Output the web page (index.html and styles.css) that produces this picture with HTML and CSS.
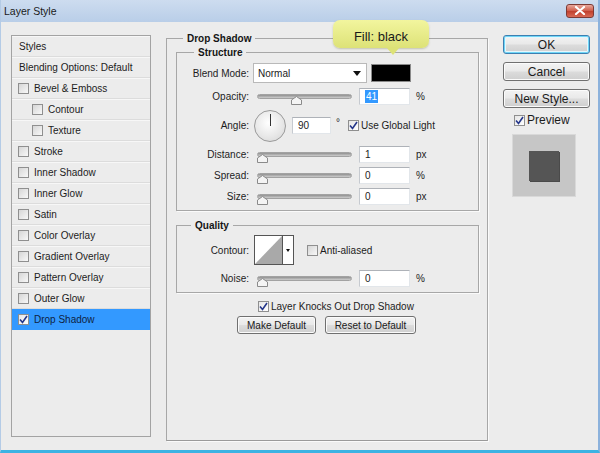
FILE: index.html
```html
<!DOCTYPE html>
<html lang="en">
<head>
    <meta charset="UTF-8">
    <title>Layer Style</title>
    <link rel="stylesheet" href="styles.css">
</head>
<body>
<div class="window">
    <div class="titlebar">
        <span class="title">Layer Style</span>
        <span class="close">
            <svg width="12" height="9" viewBox="0 0 12 9"><path d="M2 1 L10 8 M10 1 L2 8" stroke="#fff" stroke-width="2.2" stroke-linecap="round"/></svg>
        </span>
    </div>

    <div class="content">
        <!-- lista de estilos -->
        <div class="styles-list">
            <div class="item head">Styles</div>
            <div class="item head">Blending Options: Default</div>
            <div class="item"><span class="cb"></span>Bevel &amp; Emboss</div>
            <div class="item sub"><span class="cb"></span>Contour</div>
            <div class="item sub"><span class="cb"></span>Texture</div>
            <div class="item"><span class="cb"></span>Stroke</div>
            <div class="item"><span class="cb"></span>Inner Shadow</div>
            <div class="item"><span class="cb"></span>Inner Glow</div>
            <div class="item"><span class="cb"></span>Satin</div>
            <div class="item"><span class="cb"></span>Color Overlay</div>
            <div class="item"><span class="cb"></span>Gradient Overlay</div>
            <div class="item"><span class="cb"></span>Pattern Overlay</div>
            <div class="item"><span class="cb"></span>Outer Glow</div>
            <div class="item selected"><span class="cb on"><svg width="9" height="9" viewBox="0 0 9 9"><path d="M1 4.5 L3.5 7.5 L8 1" fill="none" stroke="#24368a" stroke-width="1.6"/></svg></span>Drop Shadow</div>
        </div>

        <!-- panel central -->
        <fieldset class="group main">
            <legend>Drop Shadow</legend>

            <fieldset class="group inner structure">
                <legend>Structure</legend>
                <div class="row blend-row">
                    <label class="lbl">Blend Mode:</label>
                    <div class="select">Normal<span class="arrow"></span></div>
                    <div class="swatch"></div>
                </div>
                <div class="row slider-row">
                    <label class="lbl">Opacity:</label>
                    <div class="slider"><span class="thumb" style="left: 37%"><svg width="11" height="9" viewBox="0 0 11 9"><path d="M0.5 8.5 V4 L5.5 0.5 L10.5 4 V8.5 Z" fill="#f4f4f4" stroke="#8a8a8a"/></svg></span></div>
                    <div class="field"><span class="sel">41</span></div>
                    <span class="unit">%</span>
                </div>
                <div class="row angle-row">
                    <label class="lbl">Angle:</label>
                    <div class="dial"><span class="hand"></span></div>
                    <div class="field short">90</div>
                    <span class="deg">°</span>
                    <span class="cb on"><svg width="9" height="9" viewBox="0 0 9 9"><path d="M1 4.5 L3.5 7.5 L8 1" fill="none" stroke="#24368a" stroke-width="1.6"/></svg></span>
                    <span class="cb-text">Use Global Light</span>
                </div>
                <div class="row slider-row small first">
                    <label class="lbl">Distance:</label>
                    <div class="slider"><span class="thumb" style="left: 0%"><svg width="11" height="9" viewBox="0 0 11 9"><path d="M0.5 8.5 V4 L5.5 0.5 L10.5 4 V8.5 Z" fill="#f4f4f4" stroke="#8a8a8a"/></svg></span></div>
                    <div class="field">1</div>
                    <span class="unit">px</span>
                </div>
                <div class="row slider-row small">
                    <label class="lbl">Spread:</label>
                    <div class="slider"><span class="thumb" style="left: 0%"><svg width="11" height="9" viewBox="0 0 11 9"><path d="M0.5 8.5 V4 L5.5 0.5 L10.5 4 V8.5 Z" fill="#f4f4f4" stroke="#8a8a8a"/></svg></span></div>
                    <div class="field">0</div>
                    <span class="unit">%</span>
                </div>
                <div class="row slider-row small">
                    <label class="lbl">Size:</label>
                    <div class="slider"><span class="thumb" style="left: 0%"><svg width="11" height="9" viewBox="0 0 11 9"><path d="M0.5 8.5 V4 L5.5 0.5 L10.5 4 V8.5 Z" fill="#f4f4f4" stroke="#8a8a8a"/></svg></span></div>
                    <div class="field">0</div>
                    <span class="unit">px</span>
                </div>
            </fieldset>

            <fieldset class="group inner quality">
                <legend>Quality</legend>
                <div class="row contour-row">
                    <label class="lbl">Contour:</label>
                    <div class="contour">
                        <svg width="27" height="28" viewBox="0 0 27 28"><rect width="27" height="28" fill="#fff"/><path d="M0 28 L27 0 V28 Z" fill="#a9a9a9"/></svg>
                        <span class="drop"></span>
                    </div>
                    <span class="cb"></span>
                    <span class="cb-text">Anti-aliased</span>
                </div>
                <div class="row slider-row">
                    <label class="lbl">Noise:</label>
                    <div class="slider"><span class="thumb" style="left: 0%"><svg width="11" height="9" viewBox="0 0 11 9"><path d="M0.5 8.5 V4 L5.5 0.5 L10.5 4 V8.5 Z" fill="#f4f4f4" stroke="#8a8a8a"/></svg></span></div>
                    <div class="field">0</div>
                    <span class="unit">%</span>
                </div>
            </fieldset>

            <div class="knock">
                <span class="cb on"><svg width="9" height="9" viewBox="0 0 9 9"><path d="M1 4.5 L3.5 7.5 L8 1" fill="none" stroke="#24368a" stroke-width="1.6"/></svg></span>
                <span class="cb-text">Layer Knocks Out Drop Shadow</span>
            </div>
            <div class="defaults">
                <button class="btn make">Make Default</button>
                <button class="btn reset">Reset to Default</button>
            </div>
        </fieldset>

        <!-- columna derecha -->
        <div class="side">
            <button class="btn side-btn ok">OK</button>
            <button class="btn side-btn">Cancel</button>
            <button class="btn side-btn">New Style...</button>
            <div class="preview-check">
                <span class="cb on"><svg width="9" height="9" viewBox="0 0 9 9"><path d="M1 4.5 L3.5 7.5 L8 1" fill="none" stroke="#24368a" stroke-width="1.6"/></svg></span>
                <span class="cb-text">Preview</span>
            </div>
            <div class="preview"><div class="swatch-preview"></div></div>
        </div>
    </div>

    <div class="tooltip">Fill: black</div>
</div>
</body>
</html>
```

FILE: styles.css
```css
body {
    margin: 0;
    padding: 0;
    font-family: 'Liberation Sans', Arial, sans-serif;
    font-size: 10px;
    color: #1c1c1c;
    background: #ececec;
}
.window {
    position: relative;
    width: 600px;
    height: 453px;
    box-sizing: border-box;
    background: #ececec;
    border-right: 2px solid #8cb2dc;
    border-bottom: 3px solid #3db3e3;
    border-left: 1px solid #b4cbe6;
    overflow: hidden;
}
.titlebar {
    height: 22px;
    display: flex;
    align-items: center;
    justify-content: space-between;
    background: linear-gradient(to bottom, #cddcef, #b9cee8);
    padding: 0 4px 0 3px;
}
.title {
    font-size: 10.5px;
    color: #1a1a1a;
}
.close {
    width: 28px;
    height: 14px;
    margin-top: -1px;
    border: 1px solid #7d3a35;
    border-radius: 3px;
    background: linear-gradient(to bottom, #e8a99e, #cf5a47 50%, #c03f2c 51%, #d96a55);
    display: flex;
    align-items: center;
    justify-content: center;
    box-sizing: border-box;
}
.content {
    display: flex;
    align-items: flex-start;
}

/* lista izquierda */
.styles-list {
    width: 140px;
    height: 402px;
    margin: 13px 0 0 10px;
    box-sizing: border-box;
    border: 1px solid #a3a3a3;
    background: #ececec;
}
.item {
    height: 21px;
    box-sizing: border-box;
    border-bottom: 1px solid #dcdcdc;
    box-shadow: inset 0 1px 0 #f7f7f7;
    display: flex;
    align-items: center;
    padding-left: 6px;
}
.item.head {
    padding-left: 7px;
}
.item.sub {
    padding-left: 20px;
}
.item.selected {
    background: #3399ff;
    box-shadow: none;
    color: #0f1f3f;
    border-bottom-color: #3399ff;
}
.cb {
    width: 11px;
    height: 11px;
    box-sizing: border-box;
    border: 1px solid #8f8f8f;
    background: linear-gradient(135deg, #d6d6d6, #f8f8f8);
    display: inline-flex;
    align-items: center;
    justify-content: center;
    margin-right: 5px;
    flex: none;
}
.cb.on {
    background: linear-gradient(135deg, #e6e6e6, #ffffff);
}

/* grupos */
.group {
    margin: 0;
    padding: 0;
    border: 1px solid #a7a7a7;
    box-shadow: 1px 1px 0 #fafafa;
    min-width: 0;
}
.group legend {
    font-weight: bold;
    font-size: 10px;
    line-height: 13px;
    padding: 0 4px;
    color: #151515;
}
.main {
    width: 322px;
    height: 409px;
    box-sizing: border-box;
    margin: 10px 0 0 15px;
    padding: 0 8px 0 9px;
    border-bottom-color: #9a9a9a;
}
.main > legend {
    margin-left: 7px;
}
.inner {
    width: 303px;
    box-sizing: border-box;
}
.structure > legend {
    margin-left: 17px;
}
.quality > legend {
    margin-left: 14px;
}
.structure {
    margin-top: 1px;
    padding: 3px 0 3px 0;
}
.quality {
    margin-top: 8px;
    padding: 2px 0 2px 0;
}
.row {
    display: flex;
    align-items: center;
}
.lbl {
    width: 72px;
    text-align: right;
    flex: none;
}
.blend-row {
    height: 22px;
}
.select {
    width: 114px;
    height: 20px;
    margin-left: 4px;
    box-sizing: border-box;
    background: #fff;
    border: 1px solid #b9b9b9;
    display: flex;
    align-items: center;
    justify-content: space-between;
    padding: 0 5px 0 4px;
}
.arrow {
    width: 0;
    height: 0;
    border-left: 4px solid transparent;
    border-right: 4px solid transparent;
    border-top: 5px solid #111;
}
.swatch {
    width: 40px;
    height: 18px;
    margin-left: 4px;
    box-sizing: border-box;
    background: #000;
    border: 1px solid #8a8a8a;
}
.slider-row {
    height: 24px;
}
.slider-row.small {
    height: 21px;
}
.slider-row.small.first {
    height: 22px;
}
.slider {
    position: relative;
    width: 95px;
    height: 5px;
    margin: 0 7px 0 8px;
    box-sizing: border-box;
    border: 1px solid #a2a2a2;
    border-radius: 3px;
    background: linear-gradient(to bottom, #909090, #cdcdcd);
}
.thumb {
    position: absolute;
    top: 1px;
    margin-left: -1px;
    line-height: 0;
}
.field {
    width: 51px;
    height: 17px;
    box-sizing: border-box;
    background: #fff;
    border: 1px solid #e2e6ea;
    border-top-color: #aeb2b8;
    border-left-color: #c6cad0;
    padding-left: 5px;
    display: flex;
    align-items: center;
}
.field.short {
    width: 39px;
    margin-left: 5px;
}
.sel {
    background: #3399ff;
    color: #fff;
    padding: 0 1px;
    line-height: 13px;
}
.unit {
    margin-left: 6px;
}
.angle-row {
    height: 35px;
}
.dial {
    position: relative;
    width: 32px;
    height: 32px;
    margin-left: 5px;
    margin-right: 1px;
    box-sizing: border-box;
    border: 1px solid #9a9a9a;
    border-radius: 50%;
    background: radial-gradient(circle at 45% 40%, #ffffff, #e6e6e6 60%, #d2d2d2);
}
.hand {
    position: absolute;
    left: 15px;
    top: 3px;
    width: 1px;
    height: 12px;
    background: #333;
}
.deg {
    margin-left: 5px;
    margin-right: 8px;
    font-size: 10px;
    position: relative;
    top: -3px;
}
.cb-text {
    margin-left: -3px;
}
.contour-row {
    height: 32px;
}
.contour {
    display: flex;
    margin-left: 5px;
    height: 30px;
    box-sizing: border-box;
    border: 1px solid #555;
    background: #fff;
}
.contour svg {
    display: block;
}
.drop {
    width: 10px;
    border-left: 1px solid #555;
    display: flex;
    align-items: center;
    justify-content: center;
}
.drop::after {
    content: "";
    border-left: 2px solid transparent;
    border-right: 2px solid transparent;
    border-top: 3px solid #111;
}
.contour + .cb {
    margin-left: 13px;
}
.knock {
    display: flex;
    align-items: center;
    height: 16px;
    margin: 5px 0 0 82px;
}
.defaults {
    display: flex;
    gap: 9px;
    margin: 2px 0 0 61px;
}
.btn {
    font-family: 'Liberation Sans', Arial, sans-serif;
    font-size: 10px;
    color: #1a1a1a;
    height: 18px;
    padding: 0;
    box-sizing: border-box;
    border: 1px solid #707070;
    border-radius: 3px;
    background: linear-gradient(to bottom, #f3f3f3, #e9e9e9 48%, #dcdcdc 52%, #cfcfcf);
    box-shadow: inset 0 0 0 1px #fbfbfb;
}
.make {
    width: 79px;
}
.reset {
    width: 91px;
}

/* columna derecha */
.side {
    display: flex;
    flex-direction: column;
    width: 87px;
    margin: 13px 0 0 15px;
}
.side-btn {
    height: 19px;
    margin-bottom: 8px;
    font-size: 12px;
}
.side-btn.ok {
    border-color: #3c7fb1;
    box-shadow: inset 0 0 0 1px #6fd6f7, inset 0 0 0 2px #e6f6fc;
}
.preview-check {
    display: flex;
    align-items: center;
    height: 14px;
    margin: -3px 0 0 11px;
    font-size: 12px;
}
.preview {
    width: 64px;
    height: 63px;
    margin: 7px 0 0 9px;
    box-sizing: border-box;
    border: 1px solid #d9d9d9;
    background: #c6c6c6;
    display: flex;
    align-items: center;
    justify-content: center;
}
.swatch-preview {
    width: 30px;
    height: 30px;
    background: #555555;
    box-shadow: 1px 1px 0 #4a4a4a;
}

/* globo de ayuda */
.tooltip {
    position: absolute;
    left: 332px;
    top: 20px;
    width: 96px;
    height: 28px;
    border-radius: 7px;
    background: linear-gradient(to bottom, #f2f59e, #dde277);
    box-shadow: 0 1px 2px rgba(120, 120, 60, 0.35);
    font-size: 13px;
    color: #1a1a1a;
    display: flex;
    align-items: center;
    justify-content: center;
    padding-top: 4px;
    box-sizing: border-box;
}
.tooltip::after {
    content: "";
    position: absolute;
    left: 53px;
    bottom: -7px;
    border-left: 7px solid transparent;
    border-right: 7px solid transparent;
    border-top: 8px solid #dde277;
}
```
